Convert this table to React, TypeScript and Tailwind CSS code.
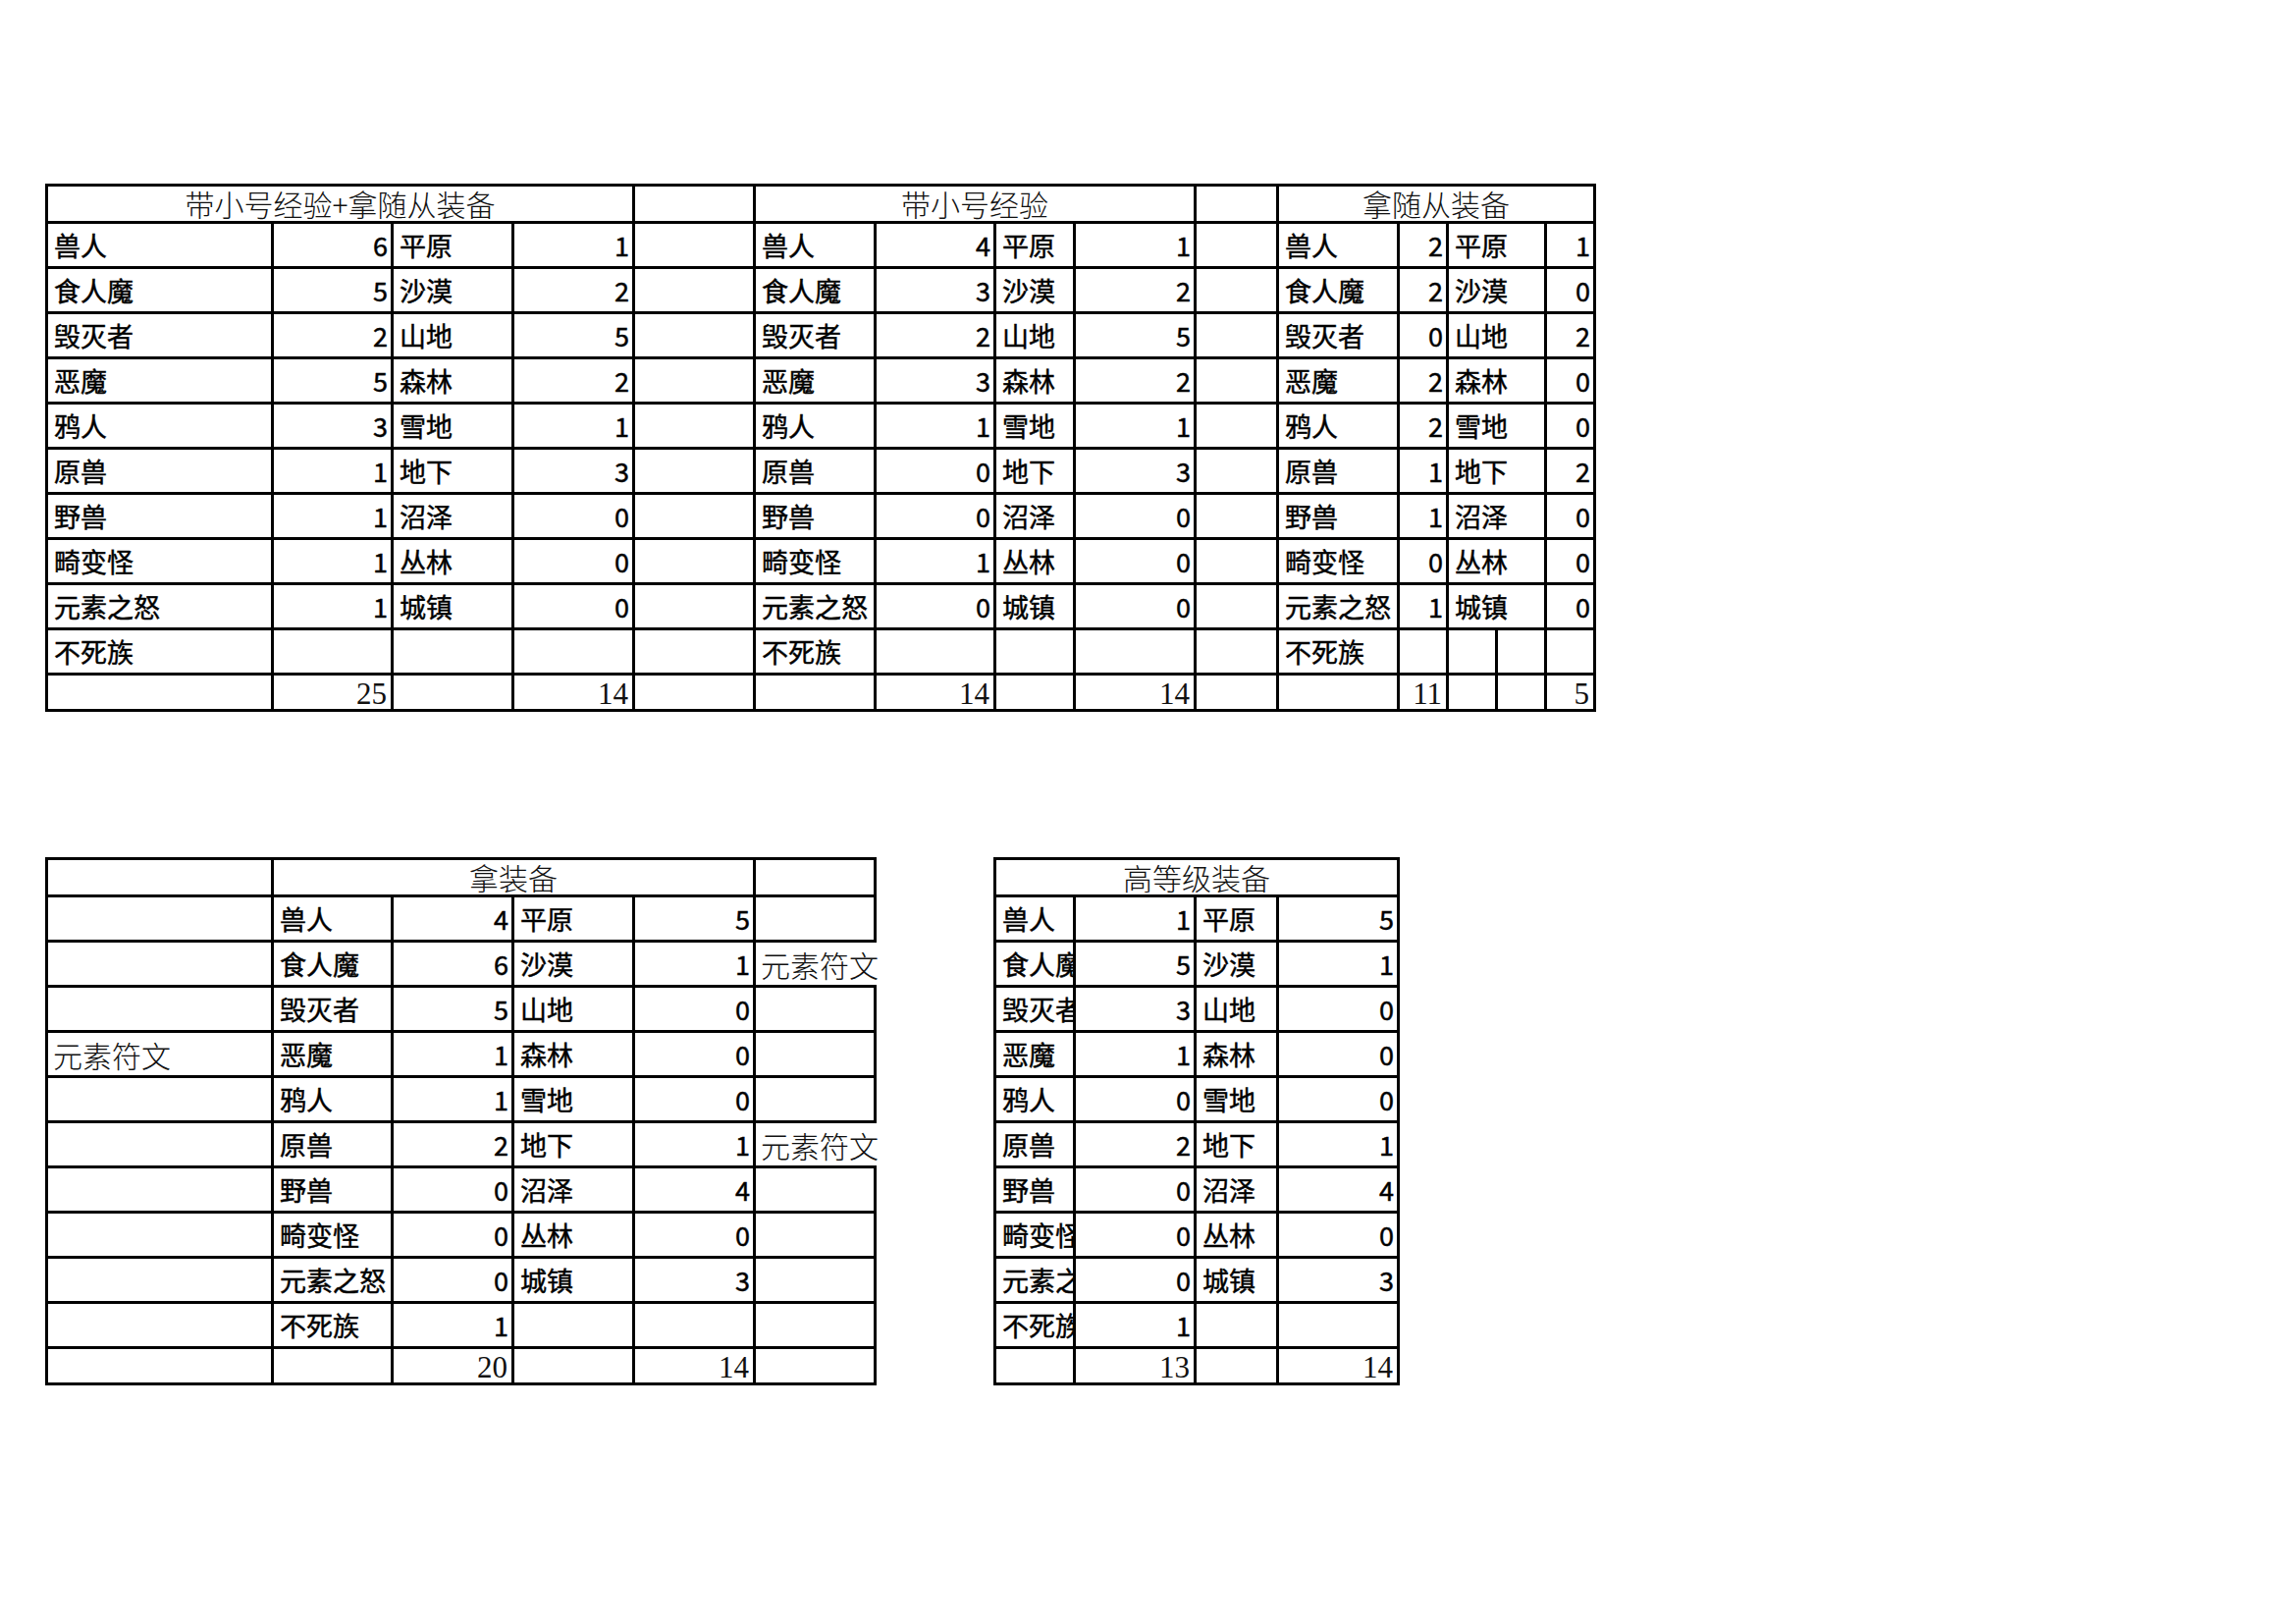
import React from "react";

type K = "name" | "num" | "head" | "total" | "song" | "cover" | "empty";
type C = { t?: string; k?: K; s?: number };

const kindClass: Record<K, string> = {
  name: "bg-white flex items-center pl-[6px] text-[27px] leading-[40px] whitespace-nowrap overflow-hidden [-webkit-text-stroke:0.45px_#000]",
  num: "bg-white flex items-center justify-end pr-[3px] text-[27px] leading-[40px] whitespace-nowrap [-webkit-text-stroke:0.45px_#000]",
  head: "bg-white flex items-center justify-center text-[30px] leading-[35px] font-light text-[#111] whitespace-nowrap",
  total:
    "bg-white flex items-end justify-end pr-[4px] font-['Liberation_Serif',serif] text-[31px] leading-none text-[#111] whitespace-nowrap",
  song: "bg-white flex items-center pl-[5px] text-[30px] leading-[40px] font-light text-[#111] whitespace-nowrap",
  cover: "bg-white flex items-center pl-[5px] text-[30px] leading-[40px] font-light text-[#111] whitespace-nowrap -mr-[3px] relative z-10",
  empty: "bg-white",
};

const spanClass: Record<number, string> = {
  1: "",
  2: "col-span-2",
  4: "col-span-4",
  5: "col-span-5",
};

function Row({ cells }: { cells: C[] }) {
  return (
    <>
      {cells.map((c, i) => (
        <div key={i} className={`${kindClass[c.k ?? "empty"]} ${spanClass[c.s ?? 1]}`}>
          {c.t}
        </div>
      ))}
    </>
  );
}

type D = [string, number, string, number];

const t1: D[] = [
  ["兽人", 6, "平原", 1],
  ["食人魔", 5, "沙漠", 2],
  ["毁灭者", 2, "山地", 5],
  ["恶魔", 5, "森林", 2],
  ["鸦人", 3, "雪地", 1],
  ["原兽", 1, "地下", 3],
  ["野兽", 1, "沼泽", 0],
  ["畸变怪", 1, "丛林", 0],
  ["元素之怒", 1, "城镇", 0],
];
const t2: D[] = [
  ["兽人", 4, "平原", 1],
  ["食人魔", 3, "沙漠", 2],
  ["毁灭者", 2, "山地", 5],
  ["恶魔", 3, "森林", 2],
  ["鸦人", 1, "雪地", 1],
  ["原兽", 0, "地下", 3],
  ["野兽", 0, "沼泽", 0],
  ["畸变怪", 1, "丛林", 0],
  ["元素之怒", 0, "城镇", 0],
];
const t3: D[] = [
  ["兽人", 2, "平原", 1],
  ["食人魔", 2, "沙漠", 0],
  ["毁灭者", 0, "山地", 2],
  ["恶魔", 2, "森林", 0],
  ["鸦人", 2, "雪地", 0],
  ["原兽", 1, "地下", 2],
  ["野兽", 1, "沼泽", 0],
  ["畸变怪", 0, "丛林", 0],
  ["元素之怒", 1, "城镇", 0],
];
const t4: D[] = [
  ["兽人", 4, "平原", 5],
  ["食人魔", 6, "沙漠", 1],
  ["毁灭者", 5, "山地", 0],
  ["恶魔", 1, "森林", 0],
  ["鸦人", 1, "雪地", 0],
  ["原兽", 2, "地下", 1],
  ["野兽", 0, "沼泽", 4],
  ["畸变怪", 0, "丛林", 0],
  ["元素之怒", 0, "城镇", 3],
];
const t5: D[] = [
  ["兽人", 1, "平原", 5],
  ["食人魔", 5, "沙漠", 1],
  ["毁灭者", 3, "山地", 0],
  ["恶魔", 1, "森林", 0],
  ["鸦人", 0, "雪地", 0],
  ["原兽", 2, "地下", 1],
  ["野兽", 0, "沼泽", 4],
  ["畸变怪", 0, "丛林", 0],
  ["元素之怒", 0, "城镇", 3],
];

const base = "font-['Noto_Sans_CJK_SC','Noto_Sans_CJK_JP',sans-serif] text-black";

function TopTable() {
  const rows: C[][] = [];
  rows.push([
    { t: "带小号经验+拿随从装备", k: "head", s: 4 },
    {},
    { t: "带小号经验", k: "head", s: 4 },
    {},
    { t: "拿随从装备", k: "head", s: 5 },
  ]);
  for (let i = 0; i < 9; i++) {
    const a = t1[i];
    const b = t2[i];
    const c = t3[i];
    rows.push([
      { t: a[0], k: "name" },
      { t: String(a[1]), k: "num" },
      { t: a[2], k: "name" },
      { t: String(a[3]), k: "num" },
      {},
      { t: b[0], k: "name" },
      { t: String(b[1]), k: "num" },
      { t: b[2], k: "name" },
      { t: String(b[3]), k: "num" },
      {},
      { t: c[0], k: "name" },
      { t: String(c[1]), k: "num" },
      { t: c[2], k: "name", s: 2 },
      { t: String(c[3]), k: "num" },
    ]);
  }
  rows.push([
    { t: "不死族", k: "name" },
    {},
    {},
    {},
    {},
    { t: "不死族", k: "name" },
    {},
    {},
    {},
    {},
    { t: "不死族", k: "name" },
    {},
    {},
    {},
    {},
  ]);
  rows.push([
    {},
    { t: "25", k: "total" },
    {},
    { t: "14", k: "total" },
    {},
    {},
    { t: "14", k: "total" },
    {},
    { t: "14", k: "total" },
    {},
    {},
    { t: "11", k: "total" },
    {},
    {},
    { t: "5", k: "total" },
  ]);
  return (
    <div
      className={`${base} grid w-max bg-black gap-[3px] p-[3px] grid-cols-[227px_119px_120px_120px_120px_120px_119px_78px_120px_81px_120px_47px_47px_47px_47px] grid-rows-[35px_repeat(10,43px)_34px]`}
    >
      {rows.map((r, i) => (
        <Row key={i} cells={r} />
      ))}
    </div>
  );
}

function BottomLeft() {
  const rows: C[][] = [];
  rows.push([{}, { t: "拿装备", k: "head", s: 4 }, {}]);
  t4.forEach((d, i) => {
    const first: C = i === 3 ? { t: "元素符文", k: "song" } : {};
    const last: C = i === 1 || i === 5 ? { t: "元素符文", k: "cover" } : {};
    rows.push([
      first,
      { t: d[0], k: "name" },
      { t: String(d[1]), k: "num" },
      { t: d[2], k: "name" },
      { t: String(d[3]), k: "num" },
      last,
    ]);
  });
  rows.push([{}, { t: "不死族", k: "name" }, { t: "1", k: "num" }, {}, {}, {}]);
  rows.push([{}, {}, { t: "20", k: "total" }, {}, { t: "14", k: "total" }, {}]);
  return (
    <div
      className={`${base} grid w-max bg-black gap-[3px] p-[3px] grid-cols-[227px_119px_120px_120px_120px_120px] grid-rows-[35px_repeat(10,43px)_34px]`}
    >
      {rows.map((r, i) => (
        <Row key={i} cells={r} />
      ))}
    </div>
  );
}

function BottomRight() {
  const rows: C[][] = [];
  rows.push([{ t: "高等级装备", k: "head", s: 4 }]);
  t5.forEach((d) => {
    rows.push([
      { t: d[0], k: "name" },
      { t: String(d[1]), k: "num" },
      { t: d[2], k: "name" },
      { t: String(d[3]), k: "num" },
    ]);
  });
  rows.push([{ t: "不死族", k: "name" }, { t: "1", k: "num" }, {}, {}]);
  rows.push([{}, { t: "13", k: "total" }, {}, { t: "14", k: "total" }]);
  return (
    <div
      className={`${base} grid w-max bg-black gap-[3px] p-[3px] grid-cols-[78px_120px_81px_120px] grid-rows-[35px_repeat(10,43px)_34px]`}
    >
      {rows.map((r, i) => (
        <Row key={i} cells={r} />
      ))}
    </div>
  );
}

export default function App() {
  return (
    <div className="w-[2339px] h-[1654px] bg-white pt-[187px] pl-[46px] flex flex-col gap-[148px] overflow-hidden">
      <TopTable />
      <div className="flex gap-[119px] items-start">
        <BottomLeft />
        <BottomRight />
      </div>
    </div>
  );
}
